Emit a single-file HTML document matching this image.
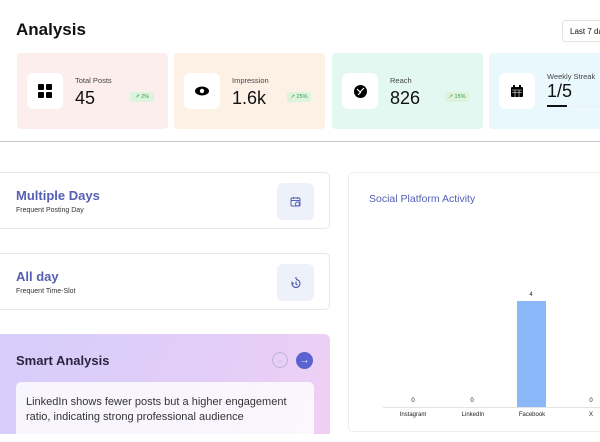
<!DOCTYPE html>
<html><head><style>
*{margin:0;padding:0;box-sizing:border-box}
body{width:600px;height:426px;overflow:hidden;background:#fff;font-family:"Liberation Sans",sans-serif;position:relative;color:#111}
.a{position:absolute}
.card{position:absolute;top:53px;height:76px;width:151px;border-radius:4px}
.ib{position:absolute;left:10px;top:20px;width:36px;height:36px;background:#fff;border-radius:6px;display:flex;align-items:center;justify-content:center}
.lb{position:absolute;left:58px;top:23px;font-size:7.5px;color:#444}
.vl{position:absolute;left:58px;top:35px;font-size:18px;color:#111}
.bd{position:absolute;left:113px;top:39px;width:24px;height:10px;background:#dcf3dc;color:#3a9b4a;font-size:5.5px;line-height:10px;text-align:center;border-radius:2px}
.lc{position:absolute;left:0;width:330px;height:57px;border:1px solid #e6e6ea;border-left:none;border-radius:0 5px 5px 0;background:#fff}
.lc h3{position:absolute;left:16px;top:15px;font-size:13px;color:#5560b5;font-weight:bold}
.lc p{position:absolute;left:16px;top:34px;font-size:7px;color:#333}
.lc .sq{position:absolute;left:277px;top:10px;width:37px;height:37px;background:#eef0fa;border-radius:6px;display:flex;align-items:center;justify-content:center}
.xl{position:absolute;top:412px;font-size:6px;color:#222;width:60px;text-align:center}
.z{position:absolute;top:398px;font-size:6px;color:#222;width:20px;text-align:center}
</style></head><body>
<div class="a" style="left:16px;top:20px;font-size:17px;font-weight:bold">Analysis</div>
<div class="a" style="left:562px;top:20px;width:50px;height:22px;border:1px solid #e4e4e4;border-radius:3px;font-size:8px;padding:6px 0 0 7px">Last 7 days</div>

<div class="card" style="left:17px;background:#fdeeee"><div class="ib"><svg width="14" height="14"><rect x="0" y="0" width="6" height="6" rx="1"/><rect x="8" y="0" width="6" height="6" rx="1"/><rect x="0" y="8" width="6" height="6" rx="1"/><rect x="8" y="8" width="6" height="6" rx="1"/></svg></div><div class="lb">Total Posts</div><div class="vl">45</div><div class="bd">↗ 2%</div></div>
<div class="card" style="left:174px;background:#fdf1e6"><div class="ib"><svg width="14" height="10"><ellipse cx="7" cy="5" rx="7" ry="4.5"/><circle cx="7" cy="5" r="2.2" fill="#fff"/></svg></div><div class="lb">Impression</div><div class="vl">1.6k</div><div class="bd">↗ 25%</div></div>
<div class="card" style="left:332px;background:#e3f8f1"><div class="ib"><svg width="13" height="13"><circle cx="6.5" cy="6.5" r="6.5"/><path d="M3 4l3 3 4-4M4 10l3-3" stroke="#fff" stroke-width="1.2" fill="none"/></svg></div><div class="lb">Reach</div><div class="vl">826</div><div class="bd">↗ 15%</div></div>
<div class="card" style="left:489px;width:120px;background:#e8f8fc"><div class="ib"><svg width="12" height="12"><rect x="0" y="2" width="12" height="10" rx="1"/><rect x="2" y="0" width="2" height="3"/><rect x="8" y="0" width="2" height="3"/><path d="M1 5h10M1 7.5h10M4 5v7M8 5v7" stroke="#fff" stroke-width=".6"/></svg></div><div class="lb" style="top:19px">Weekly Streak</div><div class="vl" style="top:28px">1/5</div><div class="a" style="left:58px;top:52px;width:20px;height:2px;background:#111"></div><div class="a" style="left:80px;top:52.5px;width:40px;height:1px;background:#eee"></div></div>
<div class="a" style="left:0;top:141px;width:600px;height:1px;background:#c8c8cc"></div>

<div class="lc" style="top:172px"><h3>Multiple Days</h3><p>Frequent Posting Day</p><div class="sq"><svg width="12" height="12" fill="none" stroke="#5560b5" stroke-width="1"><rect x="1" y="2" width="9" height="8" rx="1"/><path d="M1 4.5h9M3.5 1v2M7.5 1v2"/><circle cx="7.5" cy="8" r="2"/></svg></div></div>
<div class="lc" style="top:253px"><h3>All day</h3><p>Frequent Time-Slot</p><div class="sq"><svg width="12" height="12" fill="none" stroke="#5560b5" stroke-width="1.2"><path d="M2 6.5a4 4 0 1 0 4-4M2 4.5v2h2M6 4.5v2.5l1.5 1M5 1h2"/></svg></div></div>
<div class="a" style="left:0;top:334px;width:330px;height:100px;border-radius:0 6px 0 0;background:linear-gradient(110deg,#d6cdfa 0%,#e2cdf8 60%,#f0d0f3 100%)">
<div class="a" style="left:16px;top:19px;font-size:13px;font-weight:bold;color:#2a2540">Smart Analysis</div>
<div class="a" style="left:272px;top:18px;width:16px;height:16px;border-radius:50%;border:1px solid #bbb2e4;color:#bbb2e4;font-size:9px;text-align:center;line-height:14px">←</div>
<div class="a" style="left:296px;top:18px;width:17px;height:17px;border-radius:50%;background:#5b63cf;color:#fff;font-size:10px;text-align:center;line-height:17px;font-weight:bold">→</div>
<div class="a" style="left:16px;top:48px;width:298px;height:60px;background:rgba(255,255,255,.8);border-radius:5px;padding:13px 10px;font-size:11px;line-height:15px;color:#333">LinkedIn shows fewer posts but a higher engagement ratio, indicating strong professional audience</div>
</div>

<div class="a" style="left:348px;top:172px;width:260px;height:260px;border:1px solid #eceef0;border-radius:5px">
<div class="a" style="left:20px;top:20px;font-size:10.5px;color:#5560b5">Social Platform Activity</div>
</div>
<div class="a" style="left:383px;top:407px;width:217px;height:1px;background:#e3e3e3"></div>
<div class="a" style="left:517px;top:301px;width:29px;height:106px;background:#8ab8f8"></div>
<div class="z" style="left:403px">0</div><div class="z" style="left:462px">0</div><div class="z" style="left:521px;top:292px">4</div><div class="z" style="left:581px">0</div>
<div class="xl" style="left:383px">Instagram</div><div class="xl" style="left:443px">LinkedIn</div><div class="xl" style="left:502px">Facebook</div><div class="xl" style="left:561px">X</div>
</body></html>
